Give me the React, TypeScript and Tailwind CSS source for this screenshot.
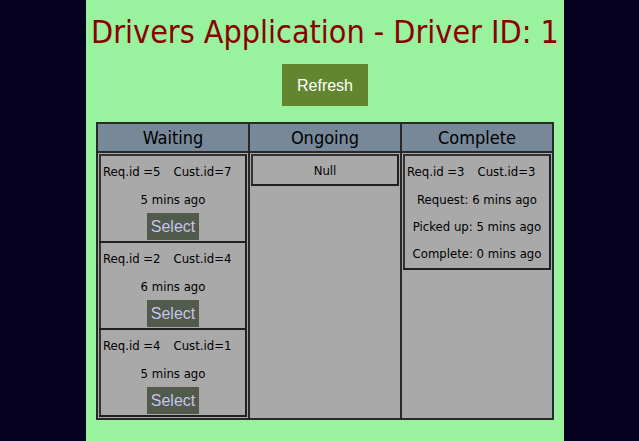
import type { ReactNode } from "react";

type Ride = { request: number; customer: number; minutes: number };

const waiting: Ride[] = [
  { request: 5, customer: 7, minutes: 5 },
  { request: 2, customer: 4, minutes: 6 },
  { request: 4, customer: 1, minutes: 5 },
];

function Card({ children }: { children: ReactNode }) {
  return (
    <tr>
      <td className="border-2 border-t-[#333333] border-r-[#202020] border-b-[#202020] border-l-[#333333] px-0 pt-0.5 pb-px text-center">
        {children}
      </td>
    </tr>
  );
}

function CardList({ children }: { children: ReactNode }) {
  return (
    <table className="w-full border-collapse text-[13px] leading-[27px]">
      <tbody>{children}</tbody>
    </table>
  );
}

function Ids({ request, customer }: { request: number; customer: number }) {
  return (
    <p className="flex gap-[13px] px-0.5 leading-7 whitespace-nowrap">
      <span>Req.id ={request}</span>
      <span>Cust.id={customer}</span>
    </p>
  );
}

export default function App() {
  return (
    <div className="min-h-screen bg-[#060020] pr-[75px] pl-[86px] font-['DejaVu_Sans_Condensed','DejaVu_Sans',sans-serif] text-black">
      <main className="flex min-h-screen flex-col items-center bg-[#98f29e] px-2.5 pt-3 pb-5">
        <h1 className="text-[32px] leading-10 whitespace-nowrap text-[#8b0000]">
          Drivers Application - Driver ID: 1
        </h1>
        <button
          type="button"
          className="mt-3 bg-[#61862f] px-[15px] pt-2.5 pb-2 font-['Liberation_Sans',Arial,sans-serif] text-base text-white"
        >
          Refresh
        </button>
        <table className="mt-4 w-full table-fixed border-collapse bg-[#a9a9a9]">
          <thead>
            <tr className="bg-[#778899] text-lg leading-[27px]">
              <th className="border-2 border-[#292929] p-0 font-normal">Waiting</th>
              <th className="border-2 border-[#292929] p-0 font-normal">Ongoing</th>
              <th className="border-2 border-[#292929] p-0 font-normal">Complete</th>
            </tr>
          </thead>
          <tbody>
            <tr className="align-top">
              <td className="border-2 border-[#292929] p-px">
                <CardList>
                  {waiting.map((ride) => (
                    <Card key={ride.request}>
                      <Ids request={ride.request} customer={ride.customer} />
                      <p>{ride.minutes} mins ago</p>
                      <button
                        type="button"
                        className="mx-auto block bg-[#525a4b] px-1 font-['Liberation_Sans',Arial,sans-serif] text-base leading-[27px] text-[#c5c5ee]"
                      >
                        Select
                      </button>
                    </Card>
                  ))}
                </CardList>
              </td>
              <td className="border-2 border-[#292929] p-px">
                <CardList>
                  <Card>
                    <p className="leading-[25px]">Null</p>
                  </Card>
                </CardList>
              </td>
              <td className="border-2 border-[#292929] p-px">
                <CardList>
                  <Card>
                    <Ids request={3} customer={3} />
                    <p>Request: 6 mins ago</p>
                    <p>Picked up: 5 mins ago</p>
                    <p>Complete: 0 mins ago</p>
                  </Card>
                </CardList>
              </td>
            </tr>
          </tbody>
        </table>
      </main>
    </div>
  );
}
